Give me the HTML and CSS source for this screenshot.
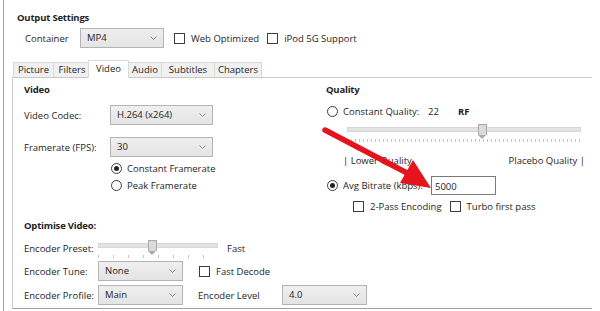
FILE: index.html
```html
<!DOCTYPE html>
<html lang="en">
<head>
    <meta charset="UTF-8">
    <title>Output Settings - Video</title>
    <link rel="stylesheet" href="styles.css">
</head>
<body>
    <div class="window">
        <div class="output-settings">
            <div class="title">Output Settings</div>
            <div class="container-row">
                <span class="container-label">Container</span>
                <div class="select sel-container">MP4<svg class="chev" width="7" height="5" viewBox="0 0 7 5"><polyline points="0.5,0.5 3.5,3.5 6.5,0.5" fill="none" stroke="#8a8a8a" stroke-width="1"/></svg></div>
                <span class="checkbox"></span><span class="check-text">Web Optimized</span>
                <span class="checkbox"></span><span class="check-text">iPod 5G Support</span>
            </div>
        </div>

        <div class="tabs">
            <div class="tab tab-picture">Picture</div>
            <div class="tab tab-filters">Filters</div>
            <div class="tab tab-video active">Video</div>
            <div class="tab tab-audio">Audio</div>
            <div class="tab tab-subtitles">Subtitles</div>
            <div class="tab tab-chapters">Chapters</div>
        </div>

        <div class="panel">
            <div class="panel-top">
                <div class="col-left">
                    <div class="heading">Video</div>
                    <div class="row row-codec">
                        <span class="label w86">Video Codec:</span>
                        <div class="select sel-wide">H.264 (x264)<svg class="chev" width="7" height="5" viewBox="0 0 7 5"><polyline points="0.5,0.5 3.5,3.5 6.5,0.5" fill="none" stroke="#8a8a8a" stroke-width="1"/></svg></div>
                    </div>
                    <div class="row row-fps">
                        <span class="label w86">Framerate (FPS):</span>
                        <div class="select sel-wide">30<svg class="chev" width="7" height="5" viewBox="0 0 7 5"><polyline points="0.5,0.5 3.5,3.5 6.5,0.5" fill="none" stroke="#8a8a8a" stroke-width="1"/></svg></div>
                    </div>
                    <div class="radio-row rr-first">
                        <span class="radio checked"></span><span>Constant Framerate</span>
                    </div>
                    <div class="radio-row">
                        <span class="radio"></span><span>Peak Framerate</span>
                    </div>
                </div>

                <div class="col-right">
                    <div class="heading">Quality</div>
                    <div class="quality-row">
                        <span class="radio"></span><span class="cq-text">Constant Quality:</span>
                        <span class="cq-value">22</span><span class="rf">RF</span>
                    </div>
                    <div class="slider slider-quality">
                        <div class="track"></div>
                        <div class="thumb" style="left: 131px"></div>
                        <div class="ticks"></div>
                    </div>
                    <div class="quality-labels">
                        <span>| Lower Quality</span>
                        <span>Placebo Quality |</span>
                    </div>
                    <div class="bitrate-row">
                        <span class="radio checked"></span><span class="br-text">Avg Bitrate (kbps):</span>
                        <div class="textbox">5000</div>
                    </div>
                    <div class="pass-row">
                        <span class="checkbox"></span><span class="check-text">2-Pass Encoding</span>
                        <span class="checkbox"></span><span class="check-text">Turbo first pass</span>
                    </div>
                </div>
            </div>

            <div class="optimise">
                <div class="heading">Optimise Video:</div>
                <div class="row row-preset">
                    <span class="label w74">Encoder Preset:</span>
                    <div class="slider slider-preset">
                        <div class="track"></div>
                        <div class="thumb" style="left: 50px"></div>
                        <div class="ticks"></div>
                    </div>
                    <span class="fast">Fast</span>
                </div>
                <div class="row row-tune">
                    <span class="label w74">Encoder Tune:</span>
                    <div class="select sel-small">None<svg class="chev" width="7" height="5" viewBox="0 0 7 5"><polyline points="0.5,0.5 3.5,3.5 6.5,0.5" fill="none" stroke="#8a8a8a" stroke-width="1"/></svg></div>
                    <span class="checkbox cb-decode"></span><span class="check-text">Fast Decode</span>
                </div>
                <div class="row row-profile">
                    <span class="label w74">Encoder Profile:</span>
                    <div class="select sel-small">Main<svg class="chev" width="7" height="5" viewBox="0 0 7 5"><polyline points="0.5,0.5 3.5,3.5 6.5,0.5" fill="none" stroke="#8a8a8a" stroke-width="1"/></svg></div>
                    <span class="level-label">Encoder Level</span>
                    <div class="select sel-small">4.0<svg class="chev" width="7" height="5" viewBox="0 0 7 5"><polyline points="0.5,0.5 3.5,3.5 6.5,0.5" fill="none" stroke="#8a8a8a" stroke-width="1"/></svg></div>
                </div>
            </div>
        </div>

        <!-- annotation arrow drawn over the dialog -->
        <svg class="arrow" width="600" height="311" viewBox="0 0 600 311">
            <line x1="325" y1="130" x2="407" y2="173" stroke="#e5141c" stroke-width="5.5" stroke-linecap="round"/>
            <polygon points="431,188 400,183 413,160" fill="#e5141c"/>
        </svg>
    </div>
</body>
</html>
```

FILE: styles.css
```css
body {
    margin: 0;
    padding: 0;
    background-color: #fff;
    font-family: "Open Sans", "Noto Sans", Arial, sans-serif;
    font-size: 9.5px;
    color: #1e1e1e;
}
.window {
    position: relative;
    width: 597px;
    height: 311px;
    margin-left: 3px;
    border-left: 1px solid #a6a6a6;
    overflow: hidden;
}
.output-settings {
    padding: 11px 0 0 13px;
}
.title {
    font-weight: bold;
    line-height: 14px;
    letter-spacing: -0.2px;
}
.container-row {
    display: flex;
    align-items: center;
    height: 20px;
    margin-top: 3px;
}
.container-label {
    width: 55px;
    margin-left: 8px;
}
.select {
    position: relative;
    box-sizing: border-box;
    height: 20px;
    line-height: 18px;
    padding-left: 6px;
    border: 1px solid #b4b4b4;
    background: linear-gradient(#efefef, #e4e4e4);
}
.chev {
    position: absolute;
    right: 6px;
    top: 7px;
}
.sel-container {
    width: 84px;
    margin-right: 10px;
}
.sel-wide {
    width: 103px;
}
.sel-small {
    width: 85px;
}
.checkbox {
    box-sizing: border-box;
    display: inline-block;
    width: 11px;
    height: 11px;
    border: 1px solid #3c3c3c;
    background-color: #fff;
    flex-shrink: 0;
}
.check-text {
    margin-left: 6px;
    margin-right: 8px;
}
.tabs {
    display: flex;
    align-items: flex-end;
    height: 17px;
    margin: 12px 0 0 9px;
}
.tab {
    box-sizing: border-box;
    height: 15px;
    line-height: 13px;
    text-align: center;
    background-color: #f0f0f0;
    border: 1px solid #d9d9d9;
    border-bottom: none;
    margin-right: -1px;
}
.tab.active {
    height: 18px;
    line-height: 16px;
    background-color: #fff;
    margin: 0 -1px -1px -2px;
    position: relative;
    z-index: 1;
    width: 41px;
}
.tab-picture { width: 41px; }
.tab-filters { width: 38px; }
.tab-video { width: 39px; }
.tab-audio { width: 34px; }
.tab-subtitles { width: 54px; }
.tab-chapters { width: 48px; }
.panel {
    box-sizing: border-box;
    width: 580px;
    height: 232px;
    margin-left: 8px;
    border-top: 1px solid #c9c9c9;
    border-left: 1px solid #cfcfcf;
    border-bottom: 1px solid #a0a0a0;
    padding: 5px 0 0 11px;
}
.panel-top {
    display: flex;
    height: 131px;
}
.col-left {
    width: 302px;
}
.col-right {
    flex-grow: 1;
}
.heading {
    font-weight: bold;
    line-height: 14px;
    letter-spacing: -0.2px;
}
.row {
    display: flex;
    align-items: center;
}
.label {
    flex-shrink: 0;
}
.w86 { width: 86px; }
.w74 { width: 74px; }
.row-codec {
    margin-top: 8px;
}
.row-fps {
    margin-top: 12px;
}
.radio {
    box-sizing: border-box;
    display: inline-block;
    position: relative;
    width: 11px;
    height: 11px;
    border: 1px solid #3c3c3c;
    border-radius: 50%;
    margin-right: 5px;
    flex-shrink: 0;
}
.radio.checked::after {
    content: "";
    position: absolute;
    left: 2px;
    top: 2px;
    width: 5px;
    height: 5px;
    border-radius: 50%;
    background-color: #222;
}
.radio-row {
    display: flex;
    align-items: center;
    height: 17px;
    margin-left: 87px;
}
.rr-first {
    margin-top: 3px;
}
.quality-row {
    display: flex;
    align-items: center;
    height: 16px;
    margin: 6px 0 0 1px;
}
.cq-text {
    width: 85px;
}
.cq-value {
    width: 30px;
}
.rf {
    font-weight: bold;
}
.slider {
    position: relative;
    height: 25px;
}
.track {
    position: absolute;
    left: 0;
    right: 0;
    top: 6px;
    height: 3px;
    background-color: #e3e3e3;
    border: 1px solid #d6d6d6;
}
.thumb {
    position: absolute;
    top: 3px;
    width: 7px;
    height: 10px;
    background-color: #dadada;
    border: 1px solid #a9a9a9;
    border-bottom: none;
}
.thumb::after {
    content: "";
    position: absolute;
    left: -1px;
    top: 10px;
    width: 0;
    height: 0;
    border-left: 4.5px solid transparent;
    border-right: 4.5px solid transparent;
    border-top: 4px solid #a9a9a9;
}
.ticks {
    position: absolute;
    left: 0;
    right: 0;
    top: 18px;
    height: 3px;
    background-image: repeating-linear-gradient(90deg, #c4c4c4 0, #c4c4c4 1px, transparent 1px, transparent 4px);
}
.slider-quality {
    width: 234px;
    margin: 2px 0 0 21px;
}
.quality-labels {
    display: flex;
    justify-content: space-between;
    width: 242px;
    line-height: 14px;
    margin: 8px 0 0 17px;
}
.bitrate-row {
    display: flex;
    align-items: center;
    height: 21px;
    margin: 7px 0 0 1px;
}
.br-text {
    width: 88px;
}
.textbox {
    box-sizing: border-box;
    width: 65px;
    height: 19px;
    line-height: 17px;
    padding: 1px 0 0 3px;
    border: 1px solid #7a7a7a;
    background-color: #fff;
}
.pass-row {
    display: flex;
    align-items: center;
    height: 14px;
    margin: 3px 0 0 27px;
}
.optimise .heading {
    margin-top: 5px;
}
.row-preset {
    height: 22px;
    margin-top: 4px;
}
.slider-preset {
    width: 120px;
    height: 22px;
    flex-shrink: 0;
}
.slider-preset .ticks {
    background-image: repeating-linear-gradient(90deg, #c4c4c4 0, #c4c4c4 1px, transparent 1px, transparent 15px);
}
.fast {
    margin-left: 9px;
}
.row-tune {
    height: 20px;
    margin-top: 2px;
}
.cb-decode {
    margin-left: 16px;
}
.row-profile {
    height: 20px;
    margin-top: 4px;
}
.level-label {
    width: 84px;
    margin-left: 15px;
}
.arrow {
    position: absolute;
    left: -4px;
    top: 0;
    pointer-events: none;
}
```
